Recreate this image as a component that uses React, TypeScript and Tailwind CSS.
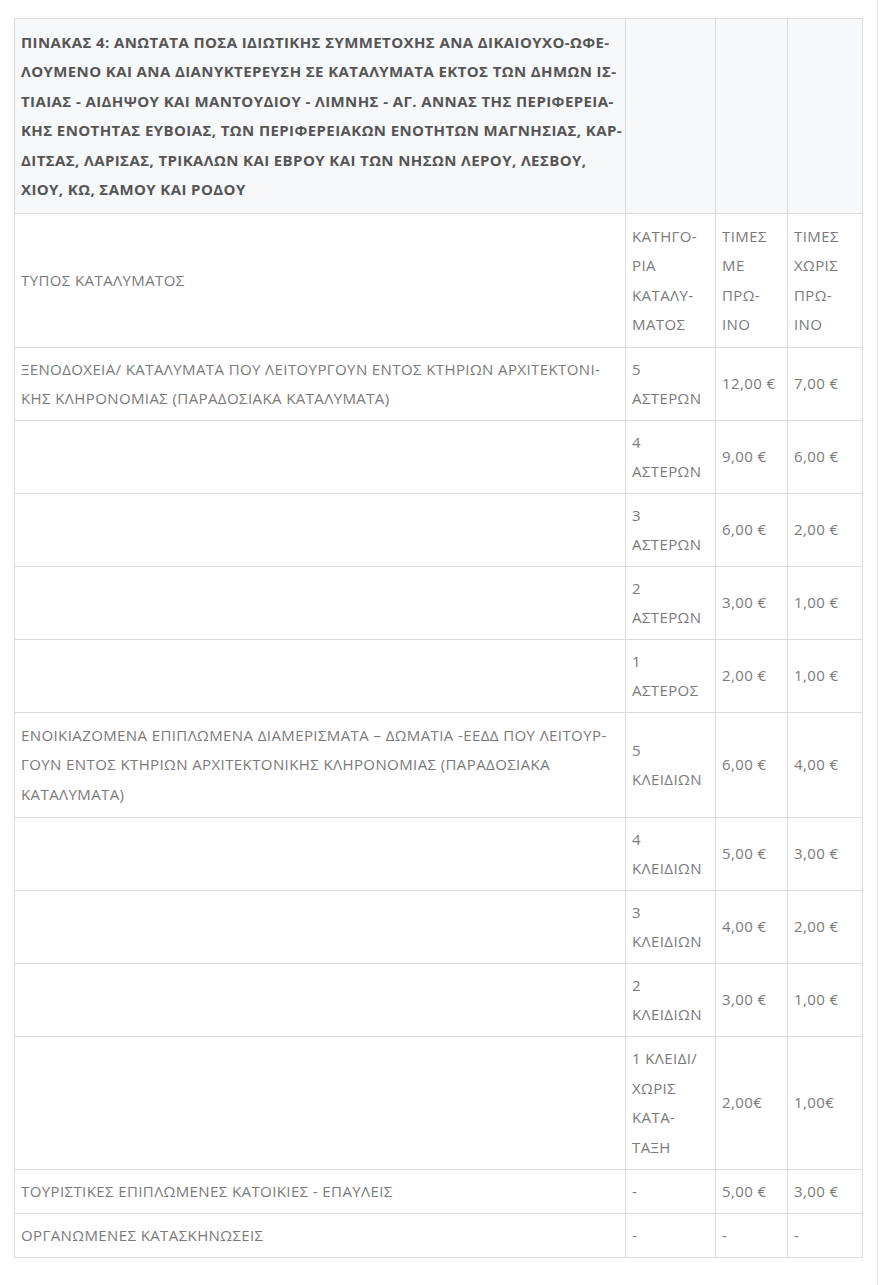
const rows: { type?: string[]; cat: string[]; withB: string; noB: string; h?: string }[] = [
  {
    type: [
      "ΞΕΝΟΔΟΧΕΙΑ/ ΚΑΤΑΛΥΜΑΤΑ ΠΟΥ ΛΕΙΤΟΥΡΓΟΥΝ ΕΝΤΟΣ ΚΤΗΡΙΩΝ ΑΡΧΙΤΕΚΤΟΝΙ-",
      "ΚΗΣ ΚΛΗΡΟΝΟΜΙΑΣ (ΠΑΡΑΔΟΣΙΑΚΑ ΚΑΤΑΛΥΜΑΤΑ)",
    ],
    cat: ["5", "ΑΣΤΕΡΩΝ"],
    withB: "12,00 €",
    noB: "7,00 €",
  },
  { cat: ["4", "ΑΣΤΕΡΩΝ"], withB: "9,00 €", noB: "6,00 €" },
  { cat: ["3", "ΑΣΤΕΡΩΝ"], withB: "6,00 €", noB: "2,00 €" },
  { cat: ["2", "ΑΣΤΕΡΩΝ"], withB: "3,00 €", noB: "1,00 €" },
  { cat: ["1", "ΑΣΤΕΡΟΣ"], withB: "2,00 €", noB: "1,00 €" },
  {
    type: [
      "ΕΝΟΙΚΙΑΖΟΜΕΝΑ ΕΠΙΠΛΩΜΕΝΑ ΔΙΑΜΕΡΙΣΜΑΤΑ – ΔΩΜΑΤΙΑ -ΕΕΔΔ ΠΟΥ ΛΕΙΤΟΥΡ-",
      "ΓΟΥΝ ΕΝΤΟΣ ΚΤΗΡΙΩΝ ΑΡΧΙΤΕΚΤΟΝΙΚΗΣ ΚΛΗΡΟΝΟΜΙΑΣ (ΠΑΡΑΔΟΣΙΑΚΑ",
      "ΚΑΤΑΛΥΜΑΤΑ)",
    ],
    cat: ["5", "ΚΛΕΙΔΙΩΝ"],
    withB: "6,00 €",
    noB: "4,00 €",
    h: "h-[105px]",
  },
  { cat: ["4", "ΚΛΕΙΔΙΩΝ"], withB: "5,00 €", noB: "3,00 €" },
  { cat: ["3", "ΚΛΕΙΔΙΩΝ"], withB: "4,00 €", noB: "2,00 €" },
  { cat: ["2", "ΚΛΕΙΔΙΩΝ"], withB: "3,00 €", noB: "1,00 €" },
  {
    cat: ["1 ΚΛΕΙΔΙ/", "ΧΩΡΙΣ", "ΚΑΤΑ-", "ΤΑΞΗ"],
    withB: "2,00€",
    noB: "1,00€",
    h: "h-[133px]",
  },
  {
    type: ["ΤΟΥΡΙΣΤΙΚΕΣ ΕΠΙΠΛΩΜΕΝΕΣ ΚΑΤΟΙΚΙΕΣ - ΕΠΑΥΛΕΙΣ"],
    cat: ["-"],
    withB: "5,00 €",
    noB: "3,00 €",
    h: "h-[44px]",
  },
  { type: ["ΟΡΓΑΝΩΜΕΝΕΣ ΚΑΤΑΣΚΗΝΩΣΕΙΣ"], cat: ["-"], withB: "-", noB: "-", h: "h-[44px]" },
];

const title = [
  "ΠΙΝΑΚΑΣ 4: ΑΝΩΤΑΤΑ ΠΟΣΑ ΙΔΙΩΤΙΚΗΣ ΣΥΜΜΕΤΟΧΗΣ ΑΝΑ ΔΙΚΑΙΟΥΧΟ-ΩΦΕ-",
  "ΛΟΥΜΕΝΟ ΚΑΙ ΑΝΑ ΔΙΑΝΥΚΤΕΡΕΥΣΗ ΣΕ ΚΑΤΑΛΥΜΑΤΑ ΕΚΤΟΣ ΤΩΝ ΔΗΜΩΝ ΙΣ-",
  "ΤΙΑΙΑΣ - ΑΙΔΗΨΟΥ ΚΑΙ ΜΑΝΤΟΥΔΙΟΥ - ΛΙΜΝΗΣ - ΑΓ. ΑΝΝΑΣ ΤΗΣ ΠΕΡΙΦΕΡΕΙΑ-",
  "ΚΗΣ ΕΝΟΤΗΤΑΣ ΕΥΒΟΙΑΣ, ΤΩΝ ΠΕΡΙΦΕΡΕΙΑΚΩΝ ΕΝΟΤΗΤΩΝ ΜΑΓΝΗΣΙΑΣ, ΚΑΡ-",
  "ΔΙΤΣΑΣ, ΛΑΡΙΣΑΣ, ΤΡΙΚΑΛΩΝ ΚΑΙ ΕΒΡΟΥ ΚΑΙ ΤΩΝ ΝΗΣΩΝ ΛΕΡΟΥ, ΛΕΣΒΟΥ,",
  "ΧΙΟΥ, ΚΩ, ΣΑΜΟΥ ΚΑΙ ΡΟΔΟΥ",
];

function Lines({ lines }: { lines?: string[] }) {
  if (!lines) return null;
  return (
    <>
      {lines.map((l, i) => (
        <div key={i} className="whitespace-nowrap">
          {l}
        </div>
      ))}
    </>
  );
}

const cell = "border border-[#dcdcdc] px-[6px] py-[6.5px] align-middle";
const headCell = "border border-[#dcdcdc] px-[6px] py-[8.5px] align-middle";

export default function App() {
  return (
    <div className="min-h-[1285px] w-[878px] border-r border-[#ececec] bg-white pl-[14px] pt-[18px] font-['Open_Sans',sans-serif] text-[15px] leading-[29.5px] tracking-[0.4px] text-[#7a7a7a]">
      <table className="w-[848px] table-fixed border-collapse">
        <colgroup>
          <col className="w-[611px]" />
          <col className="w-[90px]" />
          <col className="w-[72px]" />
          <col className="w-[75px]" />
        </colgroup>
        <tbody>
          <tr className="bg-[#f7f8fa] font-bold text-[#555]">
            <td className={headCell}>
              <Lines lines={title} />
            </td>
            <td className={headCell}></td>
            <td className={headCell}></td>
            <td className={headCell}></td>
          </tr>
          <tr className="h-[134px]">
            <td className={cell}>ΤΥΠΟΣ ΚΑΤΑΛΥΜΑΤΟΣ</td>
            <td className={cell}>
              <Lines lines={["ΚΑΤΗΓΟ-", "ΡΙΑ", "ΚΑΤΑΛΥ-", "ΜΑΤΟΣ"]} />
            </td>
            <td className={cell}>
              <Lines lines={["ΤΙΜΕΣ", "ΜΕ", "ΠΡΩ-", "ΙΝΟ"]} />
            </td>
            <td className={cell}>
              <Lines lines={["ΤΙΜΕΣ", "ΧΩΡΙΣ", "ΠΡΩ-", "ΙΝΟ"]} />
            </td>
          </tr>
          {rows.map((r, i) => (
            <tr key={i} className={r.h}>
              <td className={cell}>
                <Lines lines={r.type} />
              </td>
              <td className={cell}>
                <Lines lines={r.cat} />
              </td>
              <td className={cell}>{r.withB}</td>
              <td className={cell}>{r.noB}</td>
            </tr>
          ))}
        </tbody>
      </table>
    </div>
  );
}
